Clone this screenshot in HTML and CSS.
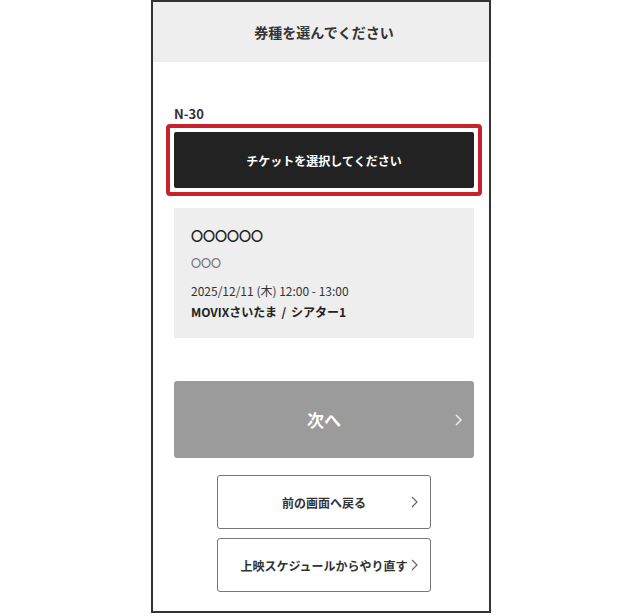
FILE: index.html
```html
<!DOCTYPE html>
<html lang="ja">
<head>
<meta charset="utf-8">
<title>券種を選んでください</title>
<link rel="stylesheet" href="styles.css">
</head>
<body>
<div class="screen">
  <div class="header">券種を選んでください</div>
  <div class="content">
    <div class="seat">N-30</div>
    <div class="highlight">
      <div class="ticket-select">チケットを選択してください</div>
    </div>
    <div class="card">
      <div class="title">〇〇〇〇〇〇</div>
      <div class="sub">〇〇〇</div>
      <div class="date">2025/12/11 (木) 12:00 - 13:00</div>
      <div class="place">MOVIXさいたま / シアター1</div>
    </div>
    <div class="next-btn">
      <span>次へ</span>
      <svg class="chev chev-next" width="7" height="12" viewBox="0 0 7 12"><polyline points="1,1 6,6 1,11" fill="none" stroke="#f2f2f2" stroke-width="1.4"/></svg>
    </div>
    <div class="sub-btn">
      <span>前の画面へ戻る</span>
      <svg class="chev chev-sub" width="7" height="12" viewBox="0 0 7 12"><polyline points="1,1 6,6 1,11" fill="none" stroke="#666" stroke-width="1.2"/></svg>
    </div>
    <div class="sub-btn">
      <span>上映スケジュールからやり直す</span>
      <svg class="chev chev-sub" width="7" height="12" viewBox="0 0 7 12"><polyline points="1,1 6,6 1,11" fill="none" stroke="#666" stroke-width="1.2"/></svg>
    </div>
  </div>
</div>
</body>
</html>
```
FILE: styles.css
```css
html, body {
  margin: 0;
  padding: 0;
  background: #ffffff;
}
body {
  font-family: "Noto Sans CJK JP", "Noto Sans", sans-serif;
  color: #333333;
}
.screen {
  margin-left: 151px;
  width: 336px;
  height: 609px;
  border: 2px solid #333333;
  background: #ffffff;
}
.header {
  height: 60px;
  background: #eeeeee;
  display: flex;
  align-items: center;
  justify-content: center;
  padding: 0 15px 0 21px;
  font-size: 14px;
  font-weight: 700;
  color: #333333;
}
.content {
  padding: 0 15px 0 21px;
}
.seat {
  margin-top: 43px;
  line-height: 18px;
  font-size: 13px;
  font-weight: 700;
  color: #333333;
}
.highlight {
  margin: 1px -8px 0 -8px;
  border: 4px solid #c8232a;
  border-radius: 4px;
  padding: 4px;
}
.ticket-select {
  height: 56px;
  background: #222222;
  border-radius: 2px;
  display: flex;
  align-items: center;
  justify-content: center;
  color: #ffffff;
  font-size: 12px;
  font-weight: 700;
}
.card {
  margin-top: 12px;
  background: #eeeeee;
  padding: 18px 17px 16px 17px;
}
.title {
  line-height: 20px;
  font-size: 12px;
  font-weight: 700;
  color: #222222;
}
.sub {
  margin-top: 7px;
  line-height: 20px;
  font-size: 10px;
  font-weight: 700;
  color: #7a7a7a;
}
.date {
  margin-top: 8px;
  line-height: 20px;
  font-size: 12px;
  color: #333333;
}
.place {
  margin-top: 1px;
  line-height: 20px;
  font-size: 12px;
  font-weight: 700;
  color: #222222;
  word-spacing: 2px;
}
.next-btn {
  position: relative;
  margin-top: 43px;
  height: 77px;
  background: #9b9b9b;
  border-radius: 3px;
  display: flex;
  align-items: center;
  justify-content: center;
  color: #ffffff;
  font-size: 17px;
  font-weight: 700;
}
.sub-btn {
  position: relative;
  margin: 17px auto 0 auto;
  width: 212px;
  height: 52px;
  border: 1px solid #777777;
  border-radius: 3px;
  display: flex;
  align-items: center;
  justify-content: center;
  color: #333333;
  font-size: 12px;
  font-weight: 700;
}
.sub-btn + .sub-btn {
  margin-top: 9px;
}
.chev {
  position: absolute;
  top: 50%;
  margin-top: -6px;
}
.chev-next {
  right: 12px;
}
.chev-sub {
  right: 12px;
}
```
